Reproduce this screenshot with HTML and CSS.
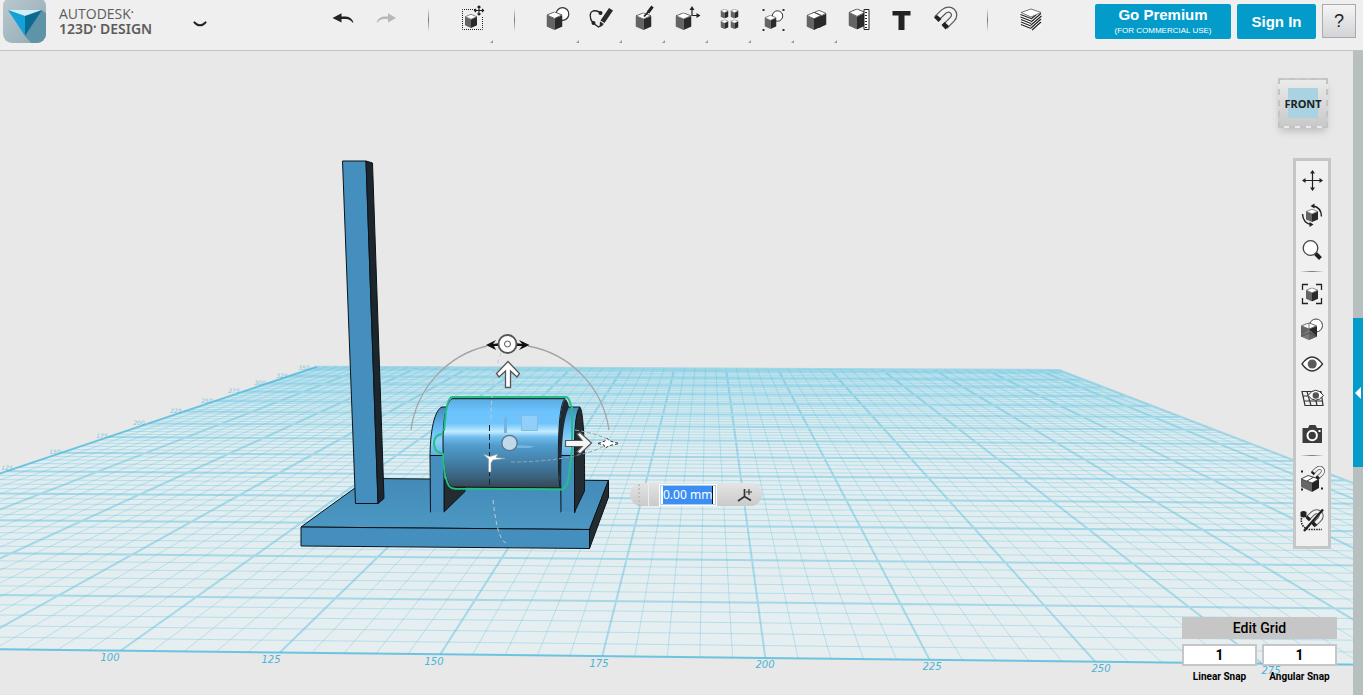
FILE: index.html
```html
<!DOCTYPE html>
<html lang="en">
<head>
<meta charset="utf-8">
<title>Autodesk 123D Design</title>
<link rel="stylesheet" href="styles.css">
</head>
<body>
<svg class="sprite" aria-hidden="true">
  <symbol id="cube" viewBox="0 0 16 18" preserveAspectRatio="none">
    <path d="M0 3.500 8 7v11l-8-3.500z" fill="#646464"/>
    <path d="M16 3.500 8 7v11l8-3.500z" fill="#2a2a2a"/>
    <path d="M8 .4 15.500 3.400 8 6.800.5 3.400z" fill="#fff" stroke="#444" stroke-width=".8"/>
  </symbol>
  <symbol id="magnet" viewBox="0 0 28 28">
    <path d="M5.500 13.500 12.500 6.800C19 1 27 8.500 21 14.500L14 21.500" fill="none" stroke="#5a5a5a" stroke-width="6.500"/>
    <path d="M5 14 12.500 6.800C19 1 27 8.500 21 14.500L13.500 22" fill="none" stroke="#f4f4f4" stroke-width="4"/>
    <path d="M3 12.500 6 10l4.500 4-3 3zM10.500 20l3-3 4.500 4-3.500 3.500z" fill="#222"/>
  </symbol>
</svg>
<div class="app">
  <header class="topbar">
    <div class="brand">
      <svg class="logo" viewBox="0 0 44 43" aria-hidden="true">
        <defs>
          <linearGradient id="logobg" x1="0" y1="0" x2="1" y2="1"><stop offset="0" stop-color="#bcc9cf"/><stop offset="1" stop-color="#8fa9b5"/></linearGradient>
          <clipPath id="logoclip"><rect y="-3" width="43" height="46" rx="9"/></clipPath>
        </defs>
        <g clip-path="url(#logoclip)">
          <rect y="-3" width="44" height="46" fill="url(#logobg)"/>
          <path d="M38.500 10 44 14v30H29l-7-8z" fill="#5f93a8"/>
        </g>
        <path d="M5 10h34L22 16z" fill="#cdeefa"/>
        <path d="M5 10l17 6v20z" fill="#12a2d8"/>
        <path d="M39 10 22 16v20z" fill="#0b6c92"/>
      </svg>
      <h1 class="brand-name"><span class="brand-maker">AUTODESK<sup>•</sup></span><span class="brand-product">123D<sup>•</sup> DESIGN</span></h1>
      <button class="menu-toggle" aria-label="Application menu"><svg viewBox="0 0 16 8" width="16" height="8"><path d="M2.500 2.500 5 4.500Q8 6 11 4.500L13.500 2.500" fill="none" stroke="#222" stroke-width="2.200" stroke-linecap="round"/></svg></button>
    </div>
    <nav class="toolbar" aria-label="Tools">
      <button class="tool" aria-label="Undo"><svg viewBox="0 0 28 28"><path d="M3.500 13 12.500 8.200v3.300h4.500q5.500.5 7.500 6h-1q-2.500-3.500-6.500-3.500h-4.500v3.500z" fill="#222"/></svg></button>
      <button class="tool" aria-label="Redo"><svg viewBox="0 0 28 28"><path d="M24 13 16 8.200v3.300h-4q-5.500.5-7.500 6h1q2.500-3.500 6.500-3.500h4v3.500z" fill="#b8b8b8"/></svg></button>
      <span class="divider"></span>
      <button class="tool more" aria-label="Transform"><svg viewBox="0 0 28 28"><path d="M17 4.500H4.500v20h20V12" fill="none" stroke="#222" stroke-dasharray="1 1"/><use href="#cube" x="7" y="9" width="12" height="14"/><path d="M16.500 5.500h9M21 1v9M18 4l-1.500 1.500L18 7M24 4l1.500 1.500L24 7M19.500 2.500 21 1l1.500 1.500M19.500 8.500 21 10l1.500-1.500" fill="none" stroke="#222" stroke-width="1.200"/></svg></button>
      <span class="divider"></span>
      <button class="tool more" aria-label="Primitives"><svg viewBox="0 0 28 28"><circle cx="18.500" cy="9" r="6.300" fill="#fff" stroke="#333" stroke-width="1.200"/><use href="#cube" x="2.500" y="6.500" width="16" height="18.500"/></svg></button>
      <button class="tool more" aria-label="Sketch"><svg viewBox="0 0 28 28"><path d="M6 18C2 13 2.500 7 6 6q4-1 7.500 2M6 18l5.500 4 4-2" fill="none" stroke="#222" stroke-width="1.300"/><circle cx="13.500" cy="8" r="2" fill="#222"/><circle cx="6.500" cy="18" r="2" fill="#222"/><path d="M22 3l4 2.500-8.500 12.500-4-2.500zM13 16.500l4 2.500-4.500 3z" fill="#2a2a2a"/></svg></button>
      <button class="tool more" aria-label="Construct"><svg viewBox="0 0 28 28"><use href="#cube" x="5.500" y="7.500" width="16" height="17.500"/><path d="M14 11.500l5.500-6" stroke="#222" stroke-width="1.800"/><path d="M18 7.500l4.500-6" stroke="#222" stroke-width="3"/></svg></button>
      <button class="tool more" aria-label="Modify"><svg viewBox="0 0 28 28"><use href="#cube" x="2.500" y="7.500" width="16" height="17.500"/><path d="M19 3v7.500h6" fill="none" stroke="#222" stroke-width="1.200"/><path d="M19 1l2.500 4h-5zM27.500 10.500l-4 2.500V8z" fill="#222"/></svg></button>
      <button class="tool more" aria-label="Pattern"><svg viewBox="0 0 28 28"><use href="#cube" x="4.500" y="4" width="8" height="9.500"/><use href="#cube" x="14.500" y="4" width="8" height="9.500"/><use href="#cube" x="4.500" y="14.500" width="8" height="9.500"/><use href="#cube" x="14.500" y="14.500" width="8" height="9.500"/></svg></button>
      <button class="tool more" aria-label="Grouping"><svg viewBox="0 0 28 28"><circle cx="18.500" cy="11" r="5.200" fill="#fff" stroke="#333"/><use href="#cube" x="5.500" y="10" width="12" height="14"/><path d="M3.500 4h2v2h-2zM23.500 4h2v2h-2zM3.500 24h2v2h-2zM23.500 24h2v2h-2z" fill="#333"/></svg></button>
      <button class="tool more" aria-label="Combine"><svg viewBox="0 0 28 28"><use href="#cube" x="9.500" y="5" width="15" height="18"/><use href="#cube" x="4.500" y="7" width="15" height="18"/><path d="M12.500 7.500l6 2.500" stroke="#444"/></svg></button>
      <button class="tool" aria-label="Measure"><svg viewBox="0 0 28 28"><use href="#cube" x="3.500" y="3.500" width="17" height="21"/><path d="M19 4.500h5v20h-5z" fill="#fff" stroke="#222"/><path d="M20 7.500h2M20 10.500h2M20 13.500h2M20 16.500h2M20 19.500h2M20 22.500h2" stroke="#222"/></svg></button>
      <button class="tool" aria-label="Text"><svg viewBox="0 0 28 28"><path d="M4.500 6h18v4.500h-6V25h-6V10.500h-6z" fill="#222"/></svg></button>
      <button class="tool" aria-label="Snap"><svg viewBox="0 0 28 28"><use href="#magnet" width="28" height="28"/></svg></button>
      <span class="divider"></span>
      <button class="tool" aria-label="Material"><svg viewBox="0 0 28 28"><path d="M3.500 8 14 12v13L4.500 21z" fill="#fff"/><path d="M24.500 8 14 12v13l9.500-4z" fill="#fff"/><path d="M3.500 9.500 14 13.500M3.500 12 14 16M4 14.500l10 4M4 17l10 4M4 19.500l10 4" stroke="#222" stroke-width="1.300"/><path d="M14 17 24 8.500M14 20 24.500 11M14 23 24 14M15 25l9-8M14 14l5-4" stroke="#222" stroke-width="1.200"/><path d="M14 4 24 7.500 14 12 4 7.500z" fill="#fff" stroke="#555" stroke-width=".8"/></svg></button>
    </nav>
    <div class="account">
      <button class="cta premium"><span>Go Premium</span><small>(FOR COMMERCIAL USE)</small></button>
      <button class="cta signin">Sign In</button>
      <button class="help" aria-label="Help">?</button>
    </div>
  </header>

  <main class="workspace">
    <svg class="scene" viewBox="0 51 1363 644" preserveAspectRatio="xMinYMin slice" role="img" aria-label="3D model on a grid">
      <defs>
        <linearGradient id="barrel" x1="0" y1="398" x2="0" y2="489" gradientUnits="userSpaceOnUse">
          <stop offset="0" stop-color="#5aaae0"/><stop offset=".15" stop-color="#6cc3fd"/><stop offset=".28" stop-color="#70c4fb"/><stop offset=".37" stop-color="#c4ecff"/><stop offset=".43" stop-color="#70bdee"/><stop offset=".52" stop-color="#509dcd"/><stop offset=".7" stop-color="#4380aa"/><stop offset=".86" stop-color="#3b6480"/><stop offset="1" stop-color="#36434e"/>
        </linearGradient>
        <linearGradient id="arch" x1="0" y1="407" x2="0" y2="456" gradientUnits="userSpaceOnUse">
          <stop offset="0" stop-color="#438abb"/><stop offset=".45" stop-color="#68bdf5"/><stop offset=".7" stop-color="#8ed2fb"/><stop offset="1" stop-color="#5aaee2"/>
        </linearGradient>
        <linearGradient id="deck" x1="0" y1="479" x2="0" y2="529" gradientUnits="userSpaceOnUse"><stop offset="0" stop-color="#438ab8"/><stop offset="1" stop-color="#4c98c3"/></linearGradient>
        <linearGradient id="floor" x1="0" y1="367" x2="0" y2="660" gradientUnits="userSpaceOnUse"><stop offset="0" stop-color="#cfe9f1"/><stop offset=".25" stop-color="#e0edf0"/><stop offset="1" stop-color="#e6eef0"/></linearGradient>
      </defs>
      <g id="grid"></g>
      <g class="ticks">
        <text x="110" y="661">100</text><text x="271" y="663">125</text><text x="434" y="665">150</text><text x="599" y="667">175</text><text x="765" y="668">200</text><text x="932" y="670">225</text><text x="1101" y="672">250</text><text x="1271" y="674">275</text>
      </g>
      <g class="ticks far">
        <text x="7" y="470">125</text><text x="55" y="454">150</text><text x="102" y="438">175</text><text x="139" y="425">200</text><text x="176" y="413">225</text><text x="207" y="403">250</text><text x="234" y="393">275</text><text x="260" y="385">300</text><text x="282" y="378">325</text><text x="304" y="370">350</text>
      </g>
      <g stroke="#0c1318" stroke-linejoin="round">
        <path d="M301 527 368 478.500 608.500 480.500 589.500 529.500z" fill="url(#deck)"/>
        <path d="M301 527 589.500 529.500V548.500L301 546z" fill="#458fbf"/>
        <path d="M589.500 529.500 608.500 480.500V497L589.500 548.500z" fill="#222c31"/>
        <path d="M342.500 161H366L378 503.500H355.500z" fill="#458fbf"/>
        <path d="M366 161 372.500 163 384 498.500 378 503.500z" fill="#1c272d"/>
        <path d="M444 480 465 487V491.500L444 512z" fill="#222c31"/>
        <path d="M430 455.500C430.500 425 436 409 442 407H452V456z" fill="url(#arch)"/>
        <path d="M430 455.500H444V512.500H430.500z" fill="#458fbf"/>
        <path d="M560 456V420L566 407H580L575 456z" fill="url(#arch)"/>
        <path d="M560.500 455.500H575V512.500H561z" fill="#458fbf"/>
        <path d="M574.500 512V456C574 430 576 410 580 407.500C583 410 585 440 584.500 491z" fill="#222c31"/>
      </g>
      <path d="M430.500 512.800H444M561 512.800H574" stroke="#4b96c1" stroke-width="2"/>
      <path d="M452 398.700H565C561 402 559 420 558.500 443C558 466 559 486 560.500 488L452 487C446 484 443 465 443 443C443 420 446 402 452 398.700z" fill="url(#barrel)" stroke="#111"/>
      <path d="M565 399C567 400 568.500 403 569 407C563 420 561.500 440 561 488C557 475 557 410 565 399z" fill="#1f2b33"/>
      <path d="M452 397H566Q570 398 571 407M444 431L446 411Q448 398 452 397M443 434Q435 434 434 442Q434 450 438 452L443 454Q444 478 449 486Q451 488.500 455 488.700L562 489.500Q567 488 569 476L572 450V407" fill="none" stroke="#23bf85" stroke-width="2"/>
      <path d="M411 430A99.500 99.500 0 0 1 487 346M528 346A99.500 99.500 0 0 1 609 430" fill="none" stroke="#a3a3a3" stroke-width="1.300"/>
      <path d="M501 353Q491 380 491 420M493 500Q498 545 508 543" fill="none" stroke="#c3cdd0" stroke-dasharray="4 3"/>
      <path d="M489.500 425V487" stroke="#18262e" stroke-dasharray="6 3"/>
      <path d="M511 462Q550 462 578 455Q600 450 607 444M575 430Q600 434 608 440" fill="none" stroke="#8fa6ae" stroke-dasharray="4 2"/>
      <path d="M483 454 490 456.500 498 454 496 457.500 506 458.500 493 460 491 463V472H488.500V459z" fill="#fff" stroke="#8a9397" stroke-width=".6"/>
      <path d="M504 418 507 416V433H504zM517 445 535 446 530 448H517z" fill="#75b5dd"/>
      <path d="M521.500 415.500h16v15h-16z" fill="#91cffa" stroke="#80bbe0"/>
      <circle cx="509.500" cy="443" r="7.700" fill="#c0d9ea" stroke="#57768b" stroke-width="1.300"/>
      <path d="M565.500 440.500H582L577 434 580 432.500 591.500 443 580 454 577 451.500 582 446.500H565.500z" fill="#f5f5f5" stroke="#555" stroke-width="1.200"/>
      <path d="M505.500 387.500V371L499 377 496.500 373.500 508 361.500 519.500 373.500 517 377 510.500 371V387.500z" fill="#fff" stroke="#555" stroke-width="1.300"/>
      <path d="M486 345 496 340 493 344 500 343V346H494L496 350zM529.500 345 519 340 522 344 516 343V346H522L519 350z" fill="#111"/>
      <circle cx="507.500" cy="344" r="9" fill="#fff" stroke="#555" stroke-width="1.800"/><circle cx="507.500" cy="344" r="3" fill="none" stroke="#555"/>
      <path d="M598 443.500 605 441 607 438.500 610 441 619 443.500 610 445.500 605 448 604 445z" fill="#fff" stroke="#333" stroke-dasharray="3 2"/>
    </svg>

    <form class="dimension">
      <span class="grip"></span>
      <label class="visually-hidden" for="distance">Distance</label>
      <input id="distance" type="text" value="0.00 mm">
      <button type="button" aria-label="Reorient"><svg viewBox="0 0 18 18" width="18" height="18"><path d="M2 15 8.500 10.500 15 14.500M8.500 10.500V3" fill="none" stroke="#333" stroke-width="1.700"/><path d="M10 6h6M13 3v6" stroke="#333" stroke-width="1.200"/></svg></button>
    </form>

    <button class="viewcube" aria-label="Front view"><span>FRONT</span></button>

    <nav class="sidebar" aria-label="View">
      <button aria-label="Pan"><svg viewBox="0 0 28 28"><path d="M5 14.500h19M14.500 5v19" stroke="#222" stroke-width="1.200"/><path d="M4 14.500l3.500-2.500v5zM25 14.500l-3.500-2.500v5zM14.500 4l2.500 3.500h-5zM14.500 25l2.500-3.500h-5z" fill="#222"/></svg></button>
      <button aria-label="Orbit"><svg viewBox="0 0 28 28"><use href="#cube" x="8" y="8" width="12" height="13"/><path d="M15 5Q23 6 23.500 15.500M13 23.500Q5 22 4.500 13" fill="none" stroke="#222" stroke-width="1.400"/><path d="M12.500 5l4-2.500v5zM15.500 23.500l-4-2.500v5z" fill="#222"/></svg></button>
      <button aria-label="Zoom"><svg viewBox="0 0 28 28"><path d="M17.500 17.500l5 5" stroke="#222" stroke-width="4"/><circle cx="12.500" cy="12" r="7.300" fill="#fff" stroke="#444" stroke-width="1.300"/></svg></button>
      <hr>
      <button aria-label="Fit"><svg viewBox="0 0 28 28"><use href="#cube" x="8" y="7.500" width="12" height="14"/><path d="M4.500 10V4.500H10M18 4.500h5.500V10M23.500 18v5.500H18M10 23.500H4.500V18" fill="none" stroke="#222" stroke-width="1.300"/></svg></button>
      <button aria-label="Materials and outlines"><svg viewBox="0 0 28 28"><circle cx="18" cy="10.500" r="6.500" fill="#fff" stroke="#444"/><use href="#cube" x="3" y="7.500" width="16" height="17.500"/><path d="M11 14 3 21.500 11 25l8-3.500z" fill="#888" opacity=".6"/><path d="M11 8v6M3 21.500 11 18l8 3.500" stroke="#444" fill="none" stroke-width=".7"/></svg></button>
      <button aria-label="Show and hide"><svg viewBox="0 0 28 28"><path d="M4 14Q14 0 24.500 14Q14 28 4 14z" fill="#fff" stroke="#333" stroke-width="1.300"/><circle cx="14.200" cy="14" r="4.500" fill="#5c5c5c"/></svg></button>
      <button aria-label="Grid visibility"><svg viewBox="0 0 28 28"><path d="M4 6.500h19l2 14H7zM5.500 11H24M6.500 16h18M9 6.500l4 14M16 6.500l3 14" fill="none" stroke="#333" stroke-width="1.200"/><path d="M10 10.500Q17.500 0 25.500 10.500Q17.500 20 10 10.500z" fill="#fff" stroke="#333"/><circle cx="17.800" cy="10.500" r="3.200" fill="#555"/></svg></button>
      <button aria-label="Screenshot"><svg viewBox="0 0 28 28"><path d="M4.500 8H10l1.500-3h6L19 8h5v15H4.500z" fill="#3c3c3c"/><circle cx="14.200" cy="15.500" r="4.700" fill="#3c3c3c" stroke="#fff" stroke-width="2"/><path d="M20.500 10h2v2h-2z" fill="#fff"/></svg></button>
      <hr>
      <button class="tall" aria-label="Snap while moving"><svg viewBox="0 0 28 28"><path d="M3 13 14 17v9L3 21z" fill="#666"/><path d="M21 13 14 17v9l7-4z" fill="#222"/><path d="M3 13 10 9.500 21 13 14 17z" fill="#fff" stroke="#444"/><path d="M9 15l7-4" stroke="#444"/><use href="#magnet" x="11" y="-1" width="17" height="17"/><path d="M3 4.500h2v2H3zM3 22.500h2v2H3zM23 21.500h2v2h-2z" fill="#222"/></svg></button>
      <button class="tall" aria-label="Disable snapping"><svg viewBox="0 0 28 28"><use href="#magnet" x="5" y="2" width="22" height="22"/><path d="M2.500 6q3-2 6 0v4.500q-3 2-6 0z" fill="#222"/><path d="M3.500 12Q2 21 11 23.500H24" fill="none" stroke="#222" stroke-width="1.600" stroke-dasharray="1.500 1"/><path d="M6 25 25 3.500" stroke="#222" stroke-width="2.400"/></svg></button>
    </nav>

    <form class="snap">
      <button type="button" class="edit-grid">Edit Grid</button>
      <div class="field"><input id="linear" type="text" value="1"><label for="linear">Linear Snap</label></div>
      <div class="field"><input id="angular" type="text" value="1"><label for="angular">Angular Snap</label></div>
    </form>

    <div class="drawer"><button class="drawer-toggle" aria-label="Open parts panel"><svg viewBox="0 0 6 12" width="6" height="12"><path d="M6 0v12L0 6z" fill="#fff"/></svg></button></div>
  </main>
</div>
<script src="grid.js"></script>
</body>
</html>
```
FILE: styles.css
```css
* { box-sizing: border-box; }
body { margin: 0; font-family: "Liberation Sans", Arial, sans-serif; color: #222; background: #e8e8e8; }
button { margin: 0; padding: 0; border: 0; background: none; color: inherit; font: inherit; cursor: pointer; }
svg { display: block; }
.sprite { position: absolute; width: 0; height: 0; }
.visually-hidden { position: absolute; width: 1px; height: 1px; overflow: hidden; clip-path: inset(50%); }

.app { display: flex; flex-direction: column; min-height: 100vh; }
.topbar { display: flex; align-items: flex-start; height: 51px; padding-right: 7px; background: #efefef; border-bottom: 1px solid #c3c3c3; }
.brand { display: flex; align-items: flex-start; width: 321px; padding-left: 3px; flex: none; }
.logo { width: 44px; height: 43px; }
.brand-name { display: flex; flex-direction: column; width: 120px; margin: 6px 0 0 12px; font-family: "Noto Sans", "Open Sans", sans-serif; font-size: 14px; line-height: 15px; color: #5c5c5c; font-weight: 400; white-space: nowrap; }
.brand-maker { font-family: "Open Sans", sans-serif; }
.brand-product { font-weight: 600; }
.brand sup { font-size: 8px; line-height: 1px; vertical-align: 4px; }
.menu-toggle { margin: 20px 0 0 13px; }
.toolbar { display: flex; flex: 1; }
.tool { position: relative; width: 43px; height: 43px; padding: 5px 0 10px; flex: none; }
.tool svg { width: 28px; height: 28px; margin: 0 auto; }
.more::after { content: ""; position: absolute; right: 0; bottom: 0; border-left: 3px solid transparent; border-bottom: 3px solid #999; }
.divider { width: 1px; height: 24px; margin: 8px 21px 0; background: linear-gradient(transparent, #777, transparent); flex: none; }
.account { display: flex; gap: 6px; padding-top: 4px; flex: none; }
.cta { height: 35px; border-radius: 2px; background: #039bc9; color: #fff; font-size: 15px; font-weight: 700; line-height: 17px; }
.premium { display: flex; flex-direction: column; align-items: center; width: 136px; padding-top: 2px; }
.premium small { font-size: 8px; font-weight: 400; line-height: 16px; }
.signin { width: 79px; }
.help { width: 34px; height: 34px; border: 1px solid #aaa; background: linear-gradient(#f5f5f5, #d2d3d6); font-size: 18px; }

.workspace { position: relative; flex: 1; overflow: hidden; background: #e8e8e8; }
.scene { position: absolute; inset: 0; width: 100%; height: 100%; }
.floor { fill: url(#floor); }
.minor, .major, .edge { fill: none; stroke: #4fb9dc; }
.minor { stroke-opacity: .3; }
.major { stroke-opacity: .42; stroke-width: 2; }
.edge { stroke-opacity: .8; stroke-width: 2; }
.ticks { fill: #48b4d6; font: italic 10px "DejaVu Sans", sans-serif; text-anchor: middle; }
.far { font-size: 6px; fill-opacity: .7; }

.dimension { position: absolute; left: 630px; top: 432px; display: flex; align-items: center; height: 23px; padding: 0 8px; border-radius: 12px; background: linear-gradient(#e4e4e4, #cacaca); }
.grip { width: 11px; height: 22px; margin-right: 11px; border-left: 2px dotted #c2c2c2; border-right: 1px solid #eee; }
.dimension input { width: 56px; height: 20px; padding: 0 2px; border: 1px solid #a9cdf5; outline: 1px solid #fff; background: linear-gradient(#111, #111) right / 1px 100% no-repeat content-box content-box, linear-gradient(#3b8ff3, #3b8ff3) content-box, #fff; color: #fff; font: 12px "Noto Sans", sans-serif; }
.dimension button { margin-left: 20px; }

.viewcube { position: absolute; right: 35px; top: 27px; display: grid; place-items: center; width: 50px; height: 50px; border: 2px dashed #c4c4c4; background: linear-gradient(#ebebeb, #c9c9c9); box-shadow: 0 5px 8px -2px #bbb; font: 700 11px "Noto Sans", sans-serif; }
.viewcube span { display: flex; align-items: center; justify-content: center; width: 30px; height: 30px; background: #a9d3e0; }

.sidebar { position: absolute; right: 32px; top: 107px; display: flex; flex-direction: column; width: 38px; padding: 1px 0 6px; border: 3px solid #c6c6c6; background: #f0f0f0; }
.sidebar button { display: grid; place-items: center; height: 35px; }
.sidebar .tall { height: 40px; }
.sidebar svg { width: 28px; height: 28px; }
.sidebar hr { width: 24px; height: 1px; margin: 4px auto; border: 0; background: linear-gradient(90deg, transparent, #777, transparent); }

.snap { position: absolute; right: 26px; bottom: 11px; display: grid; grid-template-columns: 75px 75px; gap: 5px; font-family: Roboto, sans-serif; color: #000; }
.edit-grid { grid-column: 1 / -1; height: 22px; background: #c6c6c6; font-size: 14px; font-weight: 500; }
.field { display: flex; flex-direction: column; align-items: center; gap: 4px; }
.field input { width: 100%; height: 22px; padding: 0; border: 2px solid #c6c6c6; background: #fff; color: #000; font: 700 14px Roboto, sans-serif; text-align: center; }
.field label { font-size: 10px; font-weight: 700; line-height: 14px; white-space: nowrap; }

.drawer { position: absolute; top: 0; right: 0; bottom: 0; width: 10px; padding-top: 267px; background: #b7c0bf; }
.drawer-toggle { display: grid; place-items: center; width: 10px; height: 149px; background: #029bca; }
```
FILE: grid.js
```js
// Projects the 360 x 360 mm work plane onto the canvas.
const anchors = [
  [0, 360, 317, 366.7], [360, 360, 1059, 370],
  [100, 0, 120.5, 650.7], [275, 0, 1262, 663.5]
];

function solve(rows) {
  const n = rows.length;
  for (let i = 0; i < n; i++) {
    let p = i;
    for (let r = i + 1; r < n; r++) if (Math.abs(rows[r][i]) > Math.abs(rows[p][i])) p = r;
    [rows[i], rows[p]] = [rows[p], rows[i]];
    for (let r = 0; r < n; r++) {
      if (r === i) continue;
      const f = rows[r][i] / rows[i][i];
      for (let c = i; c <= n; c++) rows[r][c] -= f * rows[i][c];
    }
  }
  return rows.map((row, i) => row[n] / row[i]);
}

const rows = [];
for (const [u, v, x, y] of anchors) {
  rows.push([u, v, 1, 0, 0, 0, -u * x, -v * x, x]);
  rows.push([0, 0, 0, u, v, 1, -u * y, -v * y, y]);
}
const h = solve(rows);

function project(u, v) {
  const w = h[6] * u + h[7] * v + 1;
  return ((h[0] * u + h[1] * v + h[2]) / w).toFixed(1) + " " + ((h[3] * u + h[4] * v + h[5]) / w).toFixed(1);
}

const line = (a, b, c, d) => "M" + project(a, b) + "L" + project(c, d);
let minor = "";
let major = "";
for (let i = 5; i < 360; i += 5) {
  const pair = line(i, 0, i, 360) + line(0, i, 360, i);
  if (i % 25 === 0) major += pair;
  else minor += pair;
}
const outline = line(0, 360, 0, 0) + "L" + project(360, 0);
const floor = line(0, 0, 360, 0) + "L" + project(360, 360) + "L" + project(0, 360) + "z";
document.getElementById("grid").innerHTML =
  `<path class="floor" d="${floor}"/><path class="minor" d="${minor}"/>` +
  `<path class="major" d="${major}${line(0, 360, 360, 360)}${line(360, 360, 360, 0)}"/><path class="edge" d="${outline}"/>`;
```
